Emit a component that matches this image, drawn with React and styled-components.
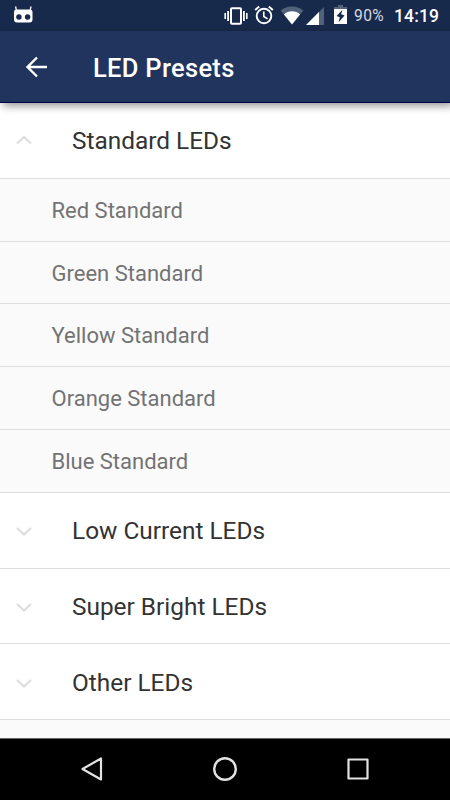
import React from "react";
import styled, { createGlobalStyle } from "styled-components";

const Global = createGlobalStyle`
  *, *::before, *::after { box-sizing: border-box; }
  body { margin: 0; background: #fff; font-family: Roboto, "Liberation Sans", sans-serif; }
`;

const Screen = styled.div`
  width: 450px;
  height: 800px;
  display: flex;
  flex-direction: column;
  overflow: hidden;
`;

const StatusBar = styled.header`
  flex: none;
  height: 31px;
  padding-left: 14px;
  padding-right: 10px;
  display: flex;
  align-items: flex-start;
  background: #182a4b;
  color: #fff;
`;

const Icon = styled.svg`
  flex: none;
  display: block;
  width: ${(p) => p.$w}px;
  height: ${(p) => p.$h}px;
  margin-top: ${(p) => p.$top || 0}px;
  margin-left: ${(p) => p.$left || 0}px;
`;

const Spacer = styled.div`
  flex: 1;
`;

const Battery = styled.span`
  width: 32px;
  margin-left: 7px;
  margin-top: 7px;
  font-size: 15.6px;
  line-height: 19px;
  letter-spacing: 0.4px;
  white-space: nowrap;
  color: #d5d9e1;
`;

const Clock = styled.span`
  width: 46px;
  margin-left: 8px;
  margin-top: 6px;
  font-size: 17.5px;
  line-height: 21px;
  font-weight: 500;
  letter-spacing: 0.15px;
  white-space: nowrap;
`;

const AppBar = styled.div`
  flex: none;
  position: relative;
  height: 72px;
  padding: 1px 0 0 22px;
  display: flex;
  align-items: center;
  background: #21345e;
  border-bottom: 1px solid #02024c;
  box-shadow: 3px 3px 8px rgba(0, 0, 0, 0.42);
`;

const Title = styled.h1`
  margin: 1px 0 0 42px;
  font-size: 25.5px;
  line-height: 30px;
  letter-spacing: 0.3px;
  font-weight: 500;
  color: #fff;
`;

const List = styled.main`
  flex: 1;
  min-height: 0;
  overflow: hidden;
  background: #fafafa;
`;

const GroupHeader = styled.div`
  height: 75.9px;
  padding-left: 12px;
  padding-top: 2px;
  display: flex;
  align-items: center;
  background: #fff;
  border-bottom: 1px solid #dedede;
`;

const GroupTitle = styled.span`
  margin-left: 36px;
  font-size: 24.4px;
  line-height: 30px;
  color: #333;
`;

const Preset = styled.div`
  height: 62.76px;
  padding: 2.4px 0 0 51.5px;
  display: flex;
  align-items: center;
  border-bottom: 1px solid #dedede;
  font-size: 22px;
  line-height: 28px;
  color: #737373;
`;

const NavBar = styled.nav`
  flex: none;
  height: 62px;
  display: flex;
  justify-content: center;
  gap: 103px;
  padding-top: 15px;
  background: #000;
  border-top: 1px solid #666;
`;

const Chevron = ({ open }) => (
  <Icon $w={24} $h={20} $top={open ? -3 : 0} viewBox="0 0 24 20" fill="none" stroke="#dcdcdc" strokeWidth="2">
    <path d={open ? "M5 13.5l7-6.6L19 13.5" : "M5 7l7 6.6L19 7"} />
  </Icon>
);

const groups = [
  { name: "Standard LEDs", open: true, presets: ["Red Standard", "Green Standard", "Yellow Standard", "Orange Standard", "Blue Standard"] },
  { name: "Low Current LEDs", presets: [] },
  { name: "Super Bright LEDs", presets: [] },
  { name: "Other LEDs", presets: [] },
];

export default function App() {
  return (
    <Screen>
      <Global />
      <StatusBar>
        <Icon $w={19} $h={17} $top={6} viewBox="0 0 19 17">
          <path d="M1.6 .5l.8 4M17 .5l-.8 4" stroke="#fff" strokeWidth="1.3" />
          <path fillRule="evenodd" fill="#fff" d="M2.8 3.5h12.9Q18.5 3.5 18.5 6.3v7.2q0 3-3 3H3q-3 0-3-3V6.3q0-2.8 2.8-2.8zM4.9 8.2a2.8 2.8 0 1 0 .01 0zM13.6 8.2a2.8 2.8 0 1 0 .01 0z" />
        </Icon>
        <Spacer />
        <Icon $w={24} $h={18} $top={7} viewBox="0 0 24 18" fill="none" stroke="#fff">
          <rect x="7" y="1.2" width="10" height="15.6" rx="1" strokeWidth="2" />
          <path d="M4.1 4v10M19.9 4v10" strokeWidth="1.8" />
          <path d="M1.2 6v6M22.8 6v6" strokeWidth="1.6" />
        </Icon>
        <Icon $w={20} $h={20} $top={5} $left={6} viewBox="0 0 20 20" fill="none" stroke="#fff">
          <circle cx="10" cy="11" r="7.3" strokeWidth="1.9" />
          <path d="M1.2 5l4-3.4M18.8 5l-4-3.4" strokeWidth="2" />
          <path d="M9.8 6.5v5l3.8 2.4" strokeWidth="1.6" />
        </Icon>
        <Icon $w={24} $h={19} $top={6} $left={6} viewBox="0 0 24 19">
          <path d="M.6 4.5Q5.4.6 12 .6t11.4 3.9L12 18.6z" fill="#53627b" />
          <path d="M4 8.5Q7.4 5.3 12 5.3t8 3.2L12 18.6z" fill="#fff" />
        </Icon>
        <Icon $w={18} $h={18} $top={7} $left={2} viewBox="0 0 18 18">
          <path d="M18 0v18H0z" fill="#53627b" />
          <path d="M13 5v13H0z" fill="#fff" />
        </Icon>
        <Icon $w={13} $h={19} $top={5} $left={10} viewBox="0 0 13 19">
          <path d="M4 0h5v2h4v2H0V2h4z" fill="#53627b" />
          <path d="M0 4h13v15H0z" fill="#fff" />
          <path d="M8.4 4.8L2.6 11l3.2 1.2-1.2 5 6-6.6-3.4-1.3z" fill="#182a4b" />
        </Icon>
        <Battery>90%</Battery>
        <Clock>14:19</Clock>
      </StatusBar>
      <AppBar>
        <Icon $w={29} $h={30} viewBox="0 0 29 30" fill="none" stroke="#fff" strokeWidth="2.4">
          <path d="M25 15H6M15 5.5L5.5 15l9.5 9.5" />
        </Icon>
        <Title>LED Presets</Title>
      </AppBar>
      <List>
        {groups.map((g) => (
          <React.Fragment key={g.name}>
            <GroupHeader>
              <Chevron open={g.open} />
              <GroupTitle>{g.name}</GroupTitle>
            </GroupHeader>
            {g.presets.map((name) => (
              <Preset key={name}>{name}</Preset>
            ))}
          </React.Fragment>
        ))}
      </List>
      <NavBar>
        <Icon $w={30} $h={30} viewBox="0 0 30 30" fill="none" stroke="#e2e2e2" strokeWidth="2.2" strokeLinejoin="round">
          <path d="M24 4.5v21L5.5 15z" />
        </Icon>
        <Icon $w={30} $h={30} viewBox="0 0 30 30" fill="none" stroke="#e2e2e2" strokeWidth="2.4">
          <circle cx="15" cy="15" r="10.8" />
        </Icon>
        <Icon $w={30} $h={30} viewBox="0 0 30 30" fill="none" stroke="#e2e2e2" strokeWidth="2.2" strokeLinejoin="round">
          <rect x="5.5" y="5.5" width="19" height="19" />
        </Icon>
      </NavBar>
    </Screen>
  );
}
